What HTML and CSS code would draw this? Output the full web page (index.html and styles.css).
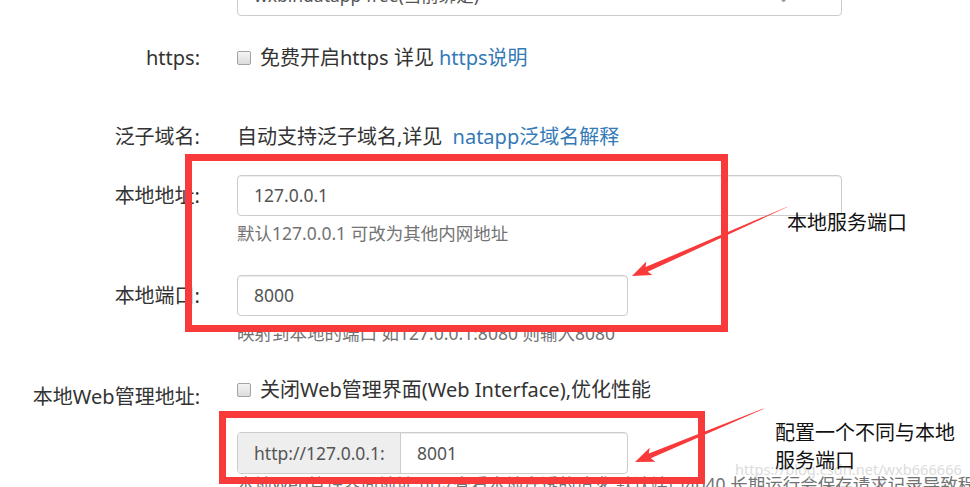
FILE: index.html
```html
<!DOCTYPE html>
<html lang="zh-CN">
<head>
<meta charset="utf-8">
<title>natapp 隧道配置</title>
<link rel="stylesheet" href="styles.css">
</head>
<body>
<form class="form">
  <div class="group g-select">
    <span class="lbl"></span>
    <div class="ctl">
      <div class="select wide">wxbindatapp free(当前绑定)<span class="caret">⌄</span></div>
    </div>
  </div>

  <div class="group g-https">
    <span class="lbl">https:</span>
    <div class="ctl">
      <label class="check"><span class="box"></span>免费开启https 详见 <a class="link">https说明</a></label>
    </div>
  </div>

  <div class="group g-wild">
    <span class="lbl">泛子域名:</span>
    <div class="ctl text">自动支持泛子域名,详见 <a class="link">natapp泛域名解释</a></div>
  </div>

  <div class="group g-local">
    <span class="lbl">本地地址:</span>
    <div class="ctl"><div class="input wide">127.0.0.1</div></div>
  </div>
  <div class="group g-help1">
    <span></span>
    <div class="help">默认127.0.0.1 可改为其他内网地址</div>
  </div>

  <div class="group g-port">
    <span class="lbl">本地端口:</span>
    <div class="ctl"><div class="input narrow">8000</div></div>
  </div>
  <div class="group g-help2">
    <span></span>
    <div class="help">映射到本地的端口 如127.0.0.1:8080 则输入8080</div>
  </div>

  <div class="group g-web">
    <span class="lbl lbl-check">本地Web管理地址:</span>
    <div class="ctl">
      <label class="check"><span class="box"></span>关闭Web管理界面(Web Interface),优化性能</label>
    </div>
  </div>
  <div class="group g-igroup">
    <span></span>
    <div class="igroup narrow">
      <span class="addon">http://127.0.0.1:</span>
      <span class="iinput">8001</span>
    </div>
  </div>
  <div class="group g-help3">
    <span></span>
    <div class="help">本地Web管理界面地址,可以查看本地穿透的请求,默认端口4040,长期运行会保存请求记录导致程序崩溃 此</div>
  </div>
</form>

<svg class="marks" width="970" height="487" viewBox="0 0 970 487" aria-hidden="true">
  <rect x="188.5" y="157.5" width="536" height="171" fill="none" stroke="#f93a3a" stroke-width="7"/>
  <rect x="222.5" y="414.5" width="479" height="66" fill="none" stroke="#f93a3a" stroke-width="7"/>
  <g transform="translate(632 276) rotate(-24)">
    <polygon points="0,0 19,-7.5 16,-2.6 170,-0.2 170,0.2 16,2.6 19,7.5" fill="#f93a3a"/>
  </g>
  <g transform="translate(635 462) rotate(-22.5)">
    <polygon points="0,0 19,-7.5 16,-2.6 139,-0.2 139,0.2 16,2.6 19,7.5" fill="#f93a3a"/>
  </g>
</svg>

<div class="note note1">本地服务端口</div>
<div class="watermark">https://blog.csdn.net/wxb666666</div>
<div class="note note2">配置一个不同与本地<br>服务端口</div>
</body>
</html>
```

FILE: styles.css
```css
html, body {
  margin: 0;
  padding: 0;
}

body {
  width: 970px;
  height: 487px;
  overflow: hidden;
  position: relative;
  background: #fff;
  color: #333;
  font-family: "Noto Sans", "Noto Sans CJK SC", sans-serif;
}

.form {
  display: flex;
  flex-direction: column;
  margin: 0;
}

.group {
  display: grid;
  grid-template-columns: 200px 605px;
  column-gap: 37px;
  align-items: center;
}

.lbl {
  text-align: right;
  font-size: 20px;
  line-height: 26px;
  color: #333;
  white-space: nowrap;
}

.lbl-check {
  align-self: start;
  padding-top: 7px;
}

.text,
.check {
  font-size: 20px;
  line-height: 26px;
  color: #333;
  white-space: nowrap;
}

.check {
  display: flex;
  align-items: center;
}

.box {
  width: 12px;
  height: 12px;
  border: 1px solid #a3a3a3;
  border-radius: 2px;
  background: linear-gradient(#f4f4f4, #dcdcdc);
  margin-right: 9px;
  flex: none;
}

.link {
  color: #337ab7;
  text-decoration: none;
  margin-left: 0.25em;
}

.input,
.select {
  box-sizing: border-box;
  height: 41px;
  border: 1px solid #ccc;
  border-radius: 4px;
  box-shadow: inset 0 1px 1px rgba(0, 0, 0, 0.075);
  padding: 0 16px;
  font-size: 17.5px;
  line-height: 39px;
  color: #555;
  background: #fff;
}

.select {
  display: flex;
  justify-content: space-between;
}

.caret {
  color: #999;
  margin-right: 34px;
}

.wide {
  width: 605px;
}

.narrow {
  width: 391px;
}

.help {
  font-size: 17.5px;
  line-height: 24px;
  color: #737373;
  white-space: nowrap;
}

.igroup {
  box-sizing: border-box;
  height: 42px;
  display: flex;
  border: 1px solid #ccc;
  border-radius: 4px;
  overflow: hidden;
  font-size: 17.5px;
  line-height: 40px;
}

.addon {
  width: 163px;
  box-sizing: border-box;
  background: #eee;
  border-right: 1px solid #ccc;
  color: #555;
  padding-left: 16px;
}

.iinput {
  flex: 1;
  padding-left: 16px;
  color: #555;
  box-shadow: inset 0 1px 1px rgba(0, 0, 0, 0.075);
}

/* vertical rhythm */
.g-select { margin-top: -25px; }
.g-https { margin-top: 29px; }
.g-wild { margin-top: 53px; }
.g-local { margin-top: 25px; }
.g-help1 { margin-top: 5px; }
.g-port { margin-top: 30px; }
.g-help2 { margin-top: 5px; }
.g-web { margin-top: 32px; align-items: start; }
.g-igroup { margin-top: 22px; }
.g-help3 { margin-top: -2px; }

/* annotations over the page */
.marks {
  position: absolute;
  left: 0;
  top: 0;
  pointer-events: none;
}

.note {
  position: absolute;
  font-family: "Noto Sans CJK SC", sans-serif;
  font-size: 20px;
  line-height: 28px;
  color: #111;
  white-space: nowrap;
}

.note1 {
  left: 787px;
  top: 208px;
}

.note2 {
  left: 775px;
  top: 418px;
}

.watermark {
  position: absolute;
  left: 735px;
  top: 459px;
  font-family: "Noto Sans", sans-serif;
  font-size: 14.6px;
  line-height: 20px;
  color: #dcdcdc;
  white-space: nowrap;
}
```
